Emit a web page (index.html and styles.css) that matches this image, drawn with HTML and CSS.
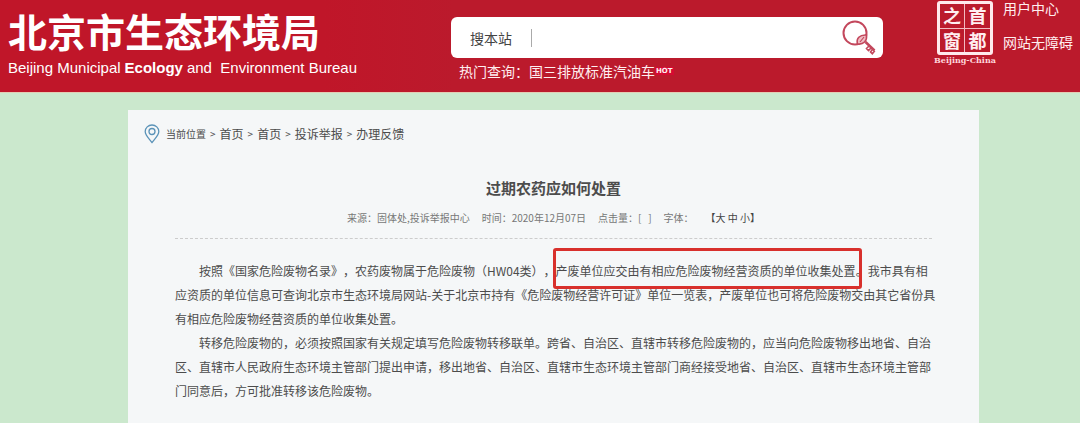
FILE: index.html
```html
<!DOCTYPE html>
<html lang="zh-CN">
<head>
<meta charset="utf-8">
<title>过期农药应如何处置</title>
<link rel="stylesheet" href="styles.css">
</head>
<body>
<header class="header">
  <div class="brand">
    <div class="brand-name">北京市生态环境局</div>
    <div class="brand-en">Beijing Municipal<b>Ecology</b>and&nbsp; Environment Bureau</div>
  </div>
  <div class="search-area">
    <form class="search">
      <label class="search-label" for="q">搜本站</label>
      <input class="search-input" id="q" type="text">
      <button class="search-button" type="button" aria-label="搜索">
        <svg width="34" height="36" viewBox="0 0 34 36" fill="none" stroke="#c3475c">
          <circle cx="13" cy="13" r="11.500" stroke-width="2"/>
          <path d="M15.500 24c-1.500-5.500 2-9.500 9-9 .8 6-3 9.800-9 9z" fill="#f0bcc4" stroke-width="1.600"/>
          <path d="M18 22l4-5" stroke-width="1.200"/>
          <path d="M23.500 22l9 8.500" stroke-width="2.500"/>
          <path d="M27 26l-2.500 2.500 2 2 2.500-2.500M30.500 29.500l-2 2.500 1.800 1.800 2.500-3" stroke-width="1.600"/>
        </svg>
      </button>
    </form>
    <div class="hot-line">热门查询：<a href="#">国三排放标准汽油车</a><span class="hot">HOT</span></div>
  </div>
  <div class="tools">
    <a class="seal" href="#">
      <span class="seal-grid"><span>之</span><span>首</span><span>窗</span><span>都</span></span>
      <span class="seal-caption">Beijing-China</span>
    </a>
    <nav class="tool-links">
      <a href="#">用户中心</a>
      <a href="#">网站无障碍</a>
    </nav>
  </div>
</header>
<main class="page">
  <nav class="crumbs">
    <svg class="pin" width="16" height="20" viewBox="0 0 16 20" fill="none" stroke="#5b93b8" stroke-width="1.300">
      <path d="M8 18.500C5 14.500 1.200 11.300 1.200 7.500a6.800 6.500 0 0 1 13.600 0C14.800 11.300 11 14.500 8 18.500z"/>
      <circle cx="8" cy="7.500" r="3"/>
    </svg>
    <span class="crumb-label">当前位置</span><span class="sep">&gt;</span>
    <a href="#">首页</a><span class="sep">&gt;</span>
    <a href="#">首页</a><span class="sep">&gt;</span>
    <a href="#">投诉举报</a><span class="sep">&gt;</span>
    <a href="#">办理反馈</a>
  </nav>
  <article class="article">
    <h1 class="title">过期农药应如何处置</h1>
    <div class="meta">
      <span>来源：固体处,投诉举报中心</span>
      <span>时间：2020年12月07日</span>
      <span>点击量：[&nbsp;&nbsp; ]</span>
      <span>字体：</span>
      <span class="sizes">【<button type="button">大</button> <button type="button">中</button> <button type="button">小</button>】</span>
    </div>
    <div class="content">
      <p>按照《国家危险废物名录》，农药废物属于危险废物（HW04类），<span class="marked">产废单位应交由有相应危险废物经营资质的单位收集处置</span>。我市具有相应资质的单位信息可查询北京市生态环境局网站-关于北京市持有《危险废物经营许可证》单位一览表，产废单位也可将危险废物交由其它省份具有相应危险废物经营资质的单位收集处置。</p>
      <p>转移危险废物的，必须按照国家有关规定填写危险废物转移联单。跨省、自治区、直辖市转移危险废物的，应当向危险废物移出地省、自治区、直辖市人民政府生态环境主管部门提出申请，移出地省、自治区、直辖市生态环境主管部门商经接受地省、自治区、直辖市生态环境主管部门同意后，方可批准转移该危险废物。</p>
    </div>
  </article>
</main>
</body>
</html>
```
FILE: styles.css
```css
* { box-sizing: border-box; }
body {
  margin: 0;
  min-height: 100vh;
  display: flex;
  flex-direction: column;
  background: #cbe8cd;
  color: #4c4c4c;
  font: 12px/24px "Noto Sans CJK SC", sans-serif;
  text-spacing-trim: space-all;
}
a { color: inherit; text-decoration: none; }
button { border: 0; padding: 0; background: none; color: inherit; font: inherit; }

.header {
  display: grid;
  grid-template-columns: 451fr 432fr 197fr;
  min-height: 93px;
  background: linear-gradient(90deg, #c01629 30%, #bb1a2c 42%);
  border-bottom: 1px solid #e3cdb4;
  color: #ffeef0;
}
.brand { padding: 8px 0 0 8px; color: #fff; white-space: nowrap; }
.brand-name { font-size: 39px; font-weight: 700; line-height: 44px; }
.brand-en { padding-top: 6px; font: 15px/20px "Liberation Sans", Arial, sans-serif; }
.brand-en b { margin: 0 4px; }

.search-area { padding-top: 17px; }
.search {
  display: flex;
  align-items: center;
  height: 41px;
  padding: 0 7px 0 19px;
  border-radius: 6px;
  background: #fff;
}
.search-label { padding-right: 19px; color: #444; font-size: 14px; }
.search-input {
  flex: 1;
  min-width: 0;
  height: 18px;
  border: 0;
  border-left: 1px solid #aaa;
  outline: 0;
  background: none;
}
.search-button { display: flex; }
.hot-line { display: flex; align-items: center; padding: 1px 0 0 8px; font-size: 14px; white-space: nowrap; }
.hot {
  padding: 0 1px;
  background: #d50a32;
  font: 700 7px/8px "DejaVu Sans", sans-serif;
}

.tools { display: flex; padding-left: 51px; gap: 7px; }
.seal { display: flex; flex-direction: column; align-items: center; width: 62px; }
.seal-grid {
  display: grid;
  grid-template-columns: 1fr 1fr;
  width: 56px;
  height: 54px;
  margin-top: 1px;
  border: 3px solid #ffe9ec;
  border-radius: 3px;
  font: 700 18px/23px "Noto Sans CJK SC", sans-serif;
  text-align: center;
}
.seal-grid span:nth-child(odd) { border-right: 1px solid #f3b9c0; }
.seal-grid span:nth-child(-n+2) { border-bottom: 1px solid #f3b9c0; }
.seal-caption { font: 700 8px/10px "DejaVu Serif", serif; color: #ffd5da; white-space: nowrap; }
.tool-links { display: flex; flex-direction: column; gap: 18px; font-size: 14px; line-height: 16px; white-space: nowrap; }

.page {
  flex: 1;
  margin: 17px 101px 0 128px;
  padding: 12px 16px 20px;
  background: #f5f7f8;
}
.crumbs { display: flex; align-items: center; gap: 4px; }
.pin { margin-right: 2px; }
.crumb-label, .sep { font-size: 10px; }
.article { padding: 0 31px; }
.title { margin: 27px 0 0; font-size: 15px; line-height: 30px; text-align: center; }
.meta {
  display: flex;
  justify-content: center;
  gap: 12px;
  padding: 5px 0 10px;
  border-bottom: 1px dashed #ccc;
  color: #777;
  font-size: 10px;
  line-height: 20px;
}
.sizes { color: #444; }
.content { margin-right: -5px; padding-top: 20px; }
.content p { margin: 0; text-indent: 24px; }
.marked { position: relative; }
.marked::after {
  content: "";
  position: absolute;
  inset: -14px -6px -10px -3px;
  border: 3px solid #d8302c;
  border-radius: 3px;
}
```
